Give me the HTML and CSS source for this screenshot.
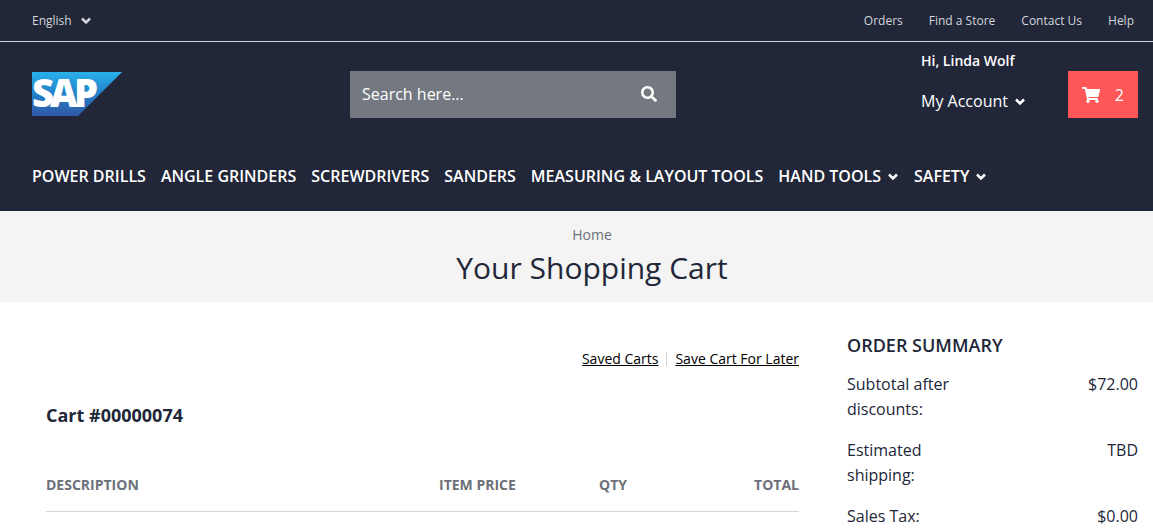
FILE: index.html
```html
<!DOCTYPE html>
<html lang="en">
<head>
<meta charset="utf-8">
<meta name="viewport" content="width=device-width, initial-scale=1">
<title>Your Shopping Cart</title>
<link rel="stylesheet" href="styles.css">
</head>
<body>
<svg class="defs" aria-hidden="true">
  <symbol id="chevron" viewBox="0 0 12 8"><path d="M2 1.500l4 4 4-4" fill="none" stroke="currentColor" stroke-width="2.500"/></symbol>
</svg>
<header class="header">
  <div class="topbar">
    <div class="language">
      <select class="language-select" aria-label="Language"><option>English</option></select>
      <svg class="chevron"><use href="#chevron"/></svg>
    </div>
    <nav class="toplinks" aria-label="Site links">
      <a href="#">Orders</a>
      <a href="#">Find a Store</a>
      <a href="#">Contact Us</a>
      <a href="#">Help</a>
    </nav>
  </div>
  <div class="masthead">
    <a class="logo" href="#" aria-label="SAP home">
      <svg width="90" height="44" viewBox="0 0 90 44">
        <defs><linearGradient id="sap" x1="0" y1="0" x2="0" y2="1"><stop offset="0" stop-color="#29b1eb"/><stop offset=".5" stop-color="#2380c8"/><stop offset="1" stop-color="#3158a6"/></linearGradient></defs>
        <path d="M0 0H90L46 44H0z" fill="url(#sap)"/>
        <text class="logo-text" x="0 18 42" y="35">SAP</text>
      </svg>
    </a>
    <form class="search">
      <input class="search-input" type="text" placeholder="Search here..." aria-label="Search">
      <button class="search-button" type="button" aria-label="Search">
        <svg width="16" height="16" viewBox="0 0 512 512" fill="currentColor"><path d="M505 442.700L405.300 343c-4.500-4.500-10.600-7-17-7H372c27.600-35.300 44-79.700 44-128C416 93.100 322.900 0 208 0S0 93.100 0 208s93.100 208 208 208c48.300 0 92.700-16.400 128-44v16.300c0 6.400 2.500 12.500 7 17l99.700 99.700c9.400 9.400 24.600 9.400 33.900 0l28.300-28.300c9.400-9.400 9.400-24.600.1-34zM208 336c-70.700 0-128-57.200-128-128 0-70.700 57.200-128 128-128 70.700 0 128 57.200 128 128 0 70.700-57.200 128-128 128z"/></svg>
      </button>
    </form>
    <div class="account">
      <span class="greeting">Hi, Linda Wolf</span>
      <button class="account-button" type="button">My Account<svg class="chevron"><use href="#chevron"/></svg></button>
    </div>
    <a class="minicart" href="#" aria-label="Cart, 2 items">
      <svg width="18" height="16" viewBox="0 0 576 512" fill="currentColor"><path d="M528.100 301.300l47.300-208C578.800 78.300 567.400 64 552 64H159.200l-9.200-44.800C147.800 8 137.900 0 126.500 0H24C10.700 0 0 10.700 0 24v16c0 13.300 10.700 24 24 24h69.900l70.200 343.400C147.300 417.100 136 435.200 136 456c0 30.900 25.100 56 56 56s56-25.100 56-56c0-15.700-6.400-29.800-16.800-40h209.600C430.400 426.200 424 440.300 424 456c0 30.900 25.100 56 56 56s56-25.100 56-56c0-22.200-12.900-41.300-31.600-50.400l5.500-24.300c3.400-15-8-29.300-23.400-29.300H218.100l-6.500-32h293.100c11.200 0 20.900-7.800 23.400-18.700z"/></svg>
      <span>2</span>
    </a>
  </div>
  <nav class="categories" aria-label="Categories">
    <a href="#">POWER DRILLS</a>
    <a href="#">ANGLE GRINDERS</a>
    <a href="#">SCREWDRIVERS</a>
    <a href="#">SANDERS</a>
    <a href="#">MEASURING &amp; LAYOUT TOOLS</a>
    <a href="#">HAND TOOLS<svg class="chevron"><use href="#chevron"/></svg></a>
    <a href="#">SAFETY<svg class="chevron"><use href="#chevron"/></svg></a>
  </nav>
</header>
<div class="page-title">
  <a href="#">Home</a>
  <h1>Your Shopping Cart</h1>
</div>
<main class="content">
  <section class="cart">
    <div class="cart-links">
      <a href="#">Saved Carts</a>
      <span class="divider"></span>
      <a href="#">Save Cart For Later</a>
    </div>
    <h2>Cart #00000074</h2>
    <table class="items">
      <thead>
        <tr><th>DESCRIPTION</th><th class="price">ITEM PRICE</th><th class="qty">QTY</th><th class="total">TOTAL</th></tr>
      </thead>
    </table>
  </section>
  <aside class="summary">
    <h2>ORDER SUMMARY</h2>
    <dl>
      <div class="summary-row"><dt>Subtotal after discounts:</dt><dd>$72.00</dd></div>
      <div class="summary-row"><dt>Estimated shipping:</dt><dd>TBD</dd></div>
      <div class="summary-row"><dt>Sales Tax:</dt><dd>$0.00</dd></div>
    </dl>
  </aside>
</main>
</body>
</html>
```
FILE: styles.css
```css
* {
  box-sizing: border-box;
}

body {
  margin: 0;
  font: 16px/24px "Open Sans", sans-serif;
  color: #212738;
  background: #fff;
}

h1, h2, dl, dd {
  margin: 0;
}

a {
  color: inherit;
  text-decoration: none;
}

button, input, select {
  font: inherit;
  color: inherit;
  border: 0;
  border-radius: 0;
  padding: 0;
  background: none;
}

.defs {
  display: none;
}

.chevron {
  width: 12px;
  height: 8px;
}

.header {
  background: #212738;
  color: #fff;
}

.topbar {
  display: flex;
  justify-content: space-between;
  align-items: center;
  height: 42px;
  padding: 0 19px 0 32px;
  border-bottom: 1px solid #d3d6db;
  color: #d3d6db;
  font-size: 12px;
  line-height: 18px;
}

.language {
  display: flex;
  align-items: center;
  gap: 8px;
}

.language-select {
  appearance: none;
}

.toplinks {
  display: flex;
  gap: 26px;
}

.masthead {
  display: grid;
  grid-template-columns: 318fr 326fr 245fr 147fr 70px;
  align-items: start;
  padding: 29px 15px 46px 32px;
}

.logo {
  padding-top: 1px;
}

.logo svg {
  display: block;
  overflow: visible;
}

.logo-text {
  font: 800 38px/44px "Open Sans", sans-serif;
  fill: #fff;
}

.search {
  display: flex;
  height: 47px;
  padding: 0 19px 2px 12px;
  background: #747880;
}

.search-input {
  flex: 1;
  min-width: 0;
  outline: 0;
}

.search-input::placeholder {
  color: #fff;
  opacity: 1;
}

.search-button {
  display: flex;
  align-items: center;
}

.account {
  grid-column: 4;
  display: flex;
  flex-direction: column;
  align-items: flex-start;
  gap: 18px;
  margin: -20px 0;
}

.greeting {
  font-size: 14px;
  line-height: 20px;
  font-weight: 600;
}

.account-button,
.categories a {
  display: flex;
  align-items: center;
  gap: 6px;
  white-space: nowrap;
}

.account-button .chevron,
.categories .chevron {
  margin-top: 2px;
}

.minicart {
  display: flex;
  align-items: center;
  justify-content: space-between;
  height: 47px;
  padding: 0 14px;
  background: #ff5757;
}

.categories {
  display: flex;
  flex-wrap: wrap;
  gap: 0 15px;
  padding: 0 15px 23px 32px;
  font-weight: 600;
}

.page-title {
  padding: 14px 0 15px 31px;
  background: #f4f4f4;
  text-align: center;
}

.page-title a {
  display: block;
  font-size: 14px;
  line-height: 20px;
  color: #6c7079;
}

.page-title h1 {
  padding-top: 4px;
  font-size: 30px;
  line-height: 38px;
  font-weight: 400;
}

.content {
  display: grid;
  grid-template-columns: 753fr 291fr;
  gap: 48px;
  padding: 31px 15px 0 46px;
}

.cart-links {
  display: flex;
  justify-content: flex-end;
  align-items: center;
  gap: 8px;
  padding-top: 16px;
  font-size: 14px;
  line-height: 20px;
  color: #000;
}

.cart-links a {
  text-decoration: underline;
}

.divider {
  width: 1px;
  height: 14px;
  background: #d3d6db;
}

h2 {
  font-size: 18px;
  line-height: 24px;
}

.cart h2 {
  padding: 34px 0 46px;
  font-weight: 700;
}

.items {
  width: 100%;
  table-layout: fixed;
  border-collapse: collapse;
  border-bottom: 1px solid #d3d6db;
  font-size: 14px;
  line-height: 20px;
  color: #6c7079;
}

.items th {
  padding: 2px 0 16px;
  text-align: left;
}

.items .price {
  width: 160px;
}

.items .qty {
  width: 100px;
}

.items .total {
  width: 100px;
  text-align: right;
}

.summary h2 {
  padding-bottom: 15px;
  font-weight: 600;
}

.summary-row {
  display: grid;
  grid-template-columns: 1fr 1fr;
  padding-bottom: 16px;
  line-height: 25px;
}

.summary-row dd {
  text-align: right;
}
```
